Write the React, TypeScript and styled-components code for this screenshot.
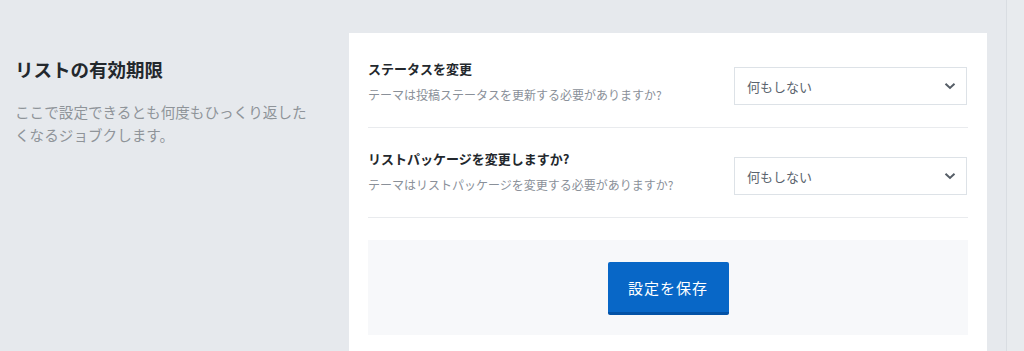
import styled, { createGlobalStyle } from 'styled-components';

const GlobalStyle = createGlobalStyle`
  html, body {
    margin: 0;
    padding: 0;
    background: #e6e9ed;
    overflow: hidden;
  }
  body {
    font-family: "Noto Sans CJK JP", "Noto Sans", sans-serif;
  }
`;

const Page = styled.div`
  display: flex;
  align-items: flex-start;
  height: 351px;
  padding-top: 33px;
  box-sizing: border-box;
`;

const Intro = styled.div`
  width: 334px;
  flex-shrink: 0;
  padding: 23px 0 0 15px;
`;

const IntroTitle = styled.h2`
  margin: 0 0 18px;
  font-size: 18.5px;
  line-height: 26px;
  font-weight: 700;
  color: #23282d;
`;

const IntroText = styled.p`
  margin: 0;
  width: 300px;
  font-size: 14.6px;
  line-height: 23px;
  color: #8f9499;
`;

const Card = styled.div`
  width: 600px;
  flex-shrink: 0;
  background: #ffffff;
  padding: 5px 19px 19px 19px;
`;

const Row = styled.div`
  display: flex;
  align-items: flex-start;
  justify-content: space-between;
  padding: 21px 0 22px;
  border-bottom: 1px solid #e9ebee;
`;

const Label = styled.div`
  display: flex;
  flex-direction: column;
`;

const RowTitle = styled.div`
  font-size: 13px;
  line-height: 20px;
  font-weight: 700;
  color: #23282d;
`;

const RowHint = styled.div`
  margin-top: 7px;
  font-size: 12px;
  line-height: 18px;
  color: #8a9099;
`;

const Select = styled.div`
  margin-top: 8px;
  margin-right: 1px;
  width: 233px;
  height: 38px;
  box-sizing: border-box;
  border: 1px solid #dde2e7;
  display: flex;
  align-items: center;
  justify-content: space-between;
  padding: 0 10px 0 12px;
  font-size: 13px;
  color: #5a636d;
`;

const Footer = styled.div`
  margin-top: 22px;
  background: #f7f8fa;
  display: flex;
  justify-content: center;
  padding: 22px 0 20px;
`;

const SaveButton = styled.button`
  width: 121px;
  height: 53px;
  border: none;
  border-bottom: 3px solid #0352a6;
  border-radius: 2px;
  background: #0867c7;
  color: #ffffff;
  font-family: "Noto Sans CJK JP", "Noto Sans", sans-serif;
  font-size: 15px;
  letter-spacing: 1px;
  cursor: pointer;
`;

const Gutter = styled.div`
  width: 19px;
  flex-shrink: 0;
`;

const Sidebar = styled.div`
  flex: 1;
  align-self: stretch;
  margin-top: -33px;
  border-left: 1px solid #d9dde2;
  background: #e8ebee;
`;

const Chevron = () => (
  <svg width="12" height="8" viewBox="0 0 12 8">
    <polyline points="1.5,1.8 6,6 10.5,1.8" fill="none" stroke="#555d66" strokeWidth="2" />
  </svg>
);

const rows = [
  { title: 'ステータスを変更', hint: 'テーマは投稿ステータスを更新する必要がありますか?' },
  { title: 'リストパッケージを変更しますか?', hint: 'テーマはリストパッケージを変更する必要がありますか?' },
];

export default function App() {
  return (
    <>
      <GlobalStyle />
      <Page>
        <Intro>
          <IntroTitle>リストの有効期限</IntroTitle>
          <IntroText>ここで設定できるとも何度もひっくり返したくなるジョブクします。</IntroText>
        </Intro>
        <Card>
          {rows.map((r) => (
            <Row key={r.title}>
              <Label>
                <RowTitle>{r.title}</RowTitle>
                <RowHint>{r.hint}</RowHint>
              </Label>
              <Select>
                何もしない
                <Chevron />
              </Select>
            </Row>
          ))}
          <Footer>
            <SaveButton>設定を保存</SaveButton>
          </Footer>
        </Card>
        <Gutter />
        <Sidebar />
      </Page>
    </>
  );
}
